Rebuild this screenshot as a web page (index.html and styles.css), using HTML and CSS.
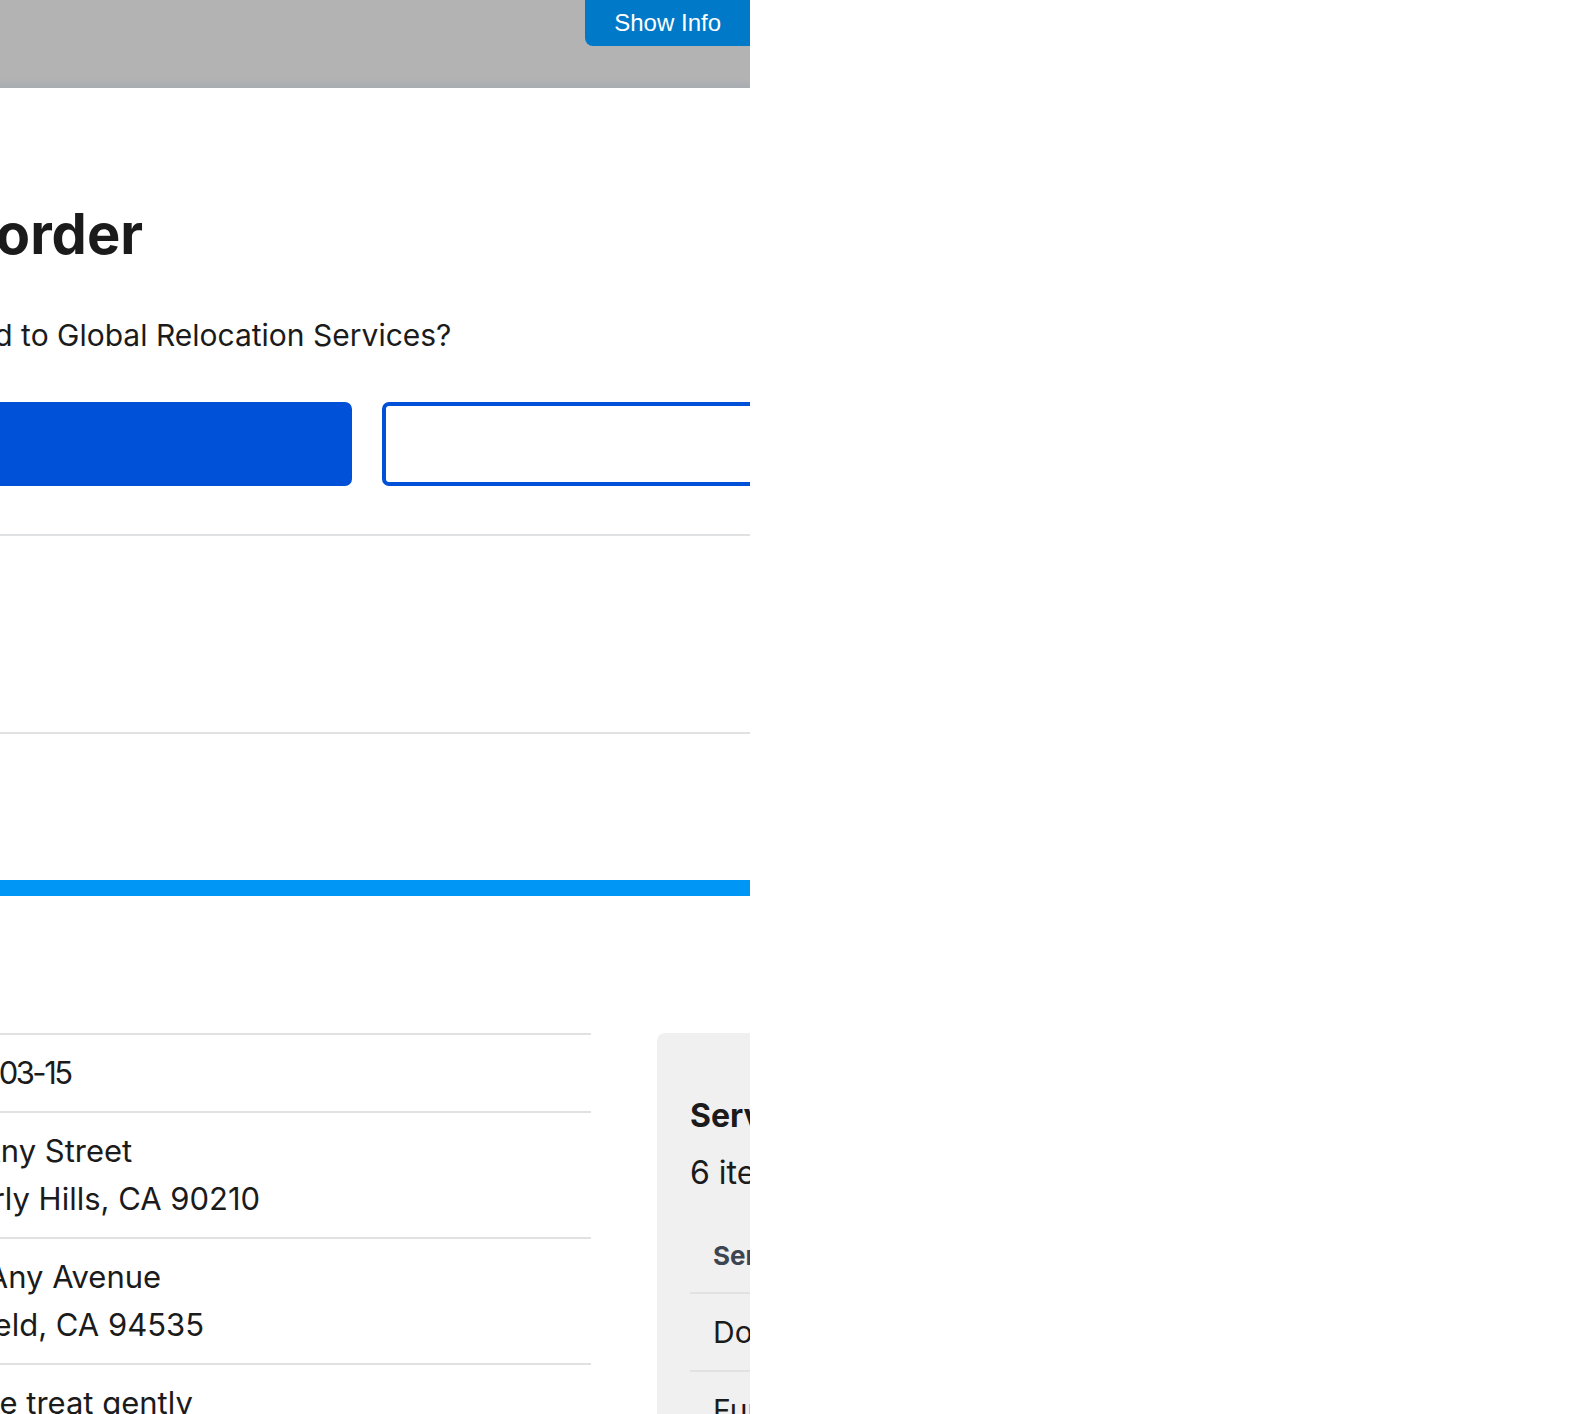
FILE: index.html
```html
<!DOCTYPE html>
<html lang="en">
<head>
<meta charset="utf-8">
<title>Transfer order</title>
<link rel="stylesheet" href="styles.css">
</head>
<body>
<div class="frame">
  <header class="topbar">
    <button class="show-info" type="button">Show Info</button>
  </header>
  <main class="page">
    <section class="confirm">
      <h1 class="confirm-title">Transfer this order</h1>
      <p class="confirm-text">Should this get transferred to Global Relocation Services?</p>
      <div class="confirm-actions">
        <button class="btn btn-primary" type="button" aria-label="Yes, transfer"></button>
        <button class="btn btn-outline" type="button" aria-label="No, go back"></button>
      </div>
    </section>
    <hr class="rule">
    <div class="blank-panel"></div>
    <hr class="rule">
    <div class="progress"></div>
    <section class="details">
      <dl class="detail-list">
        <div class="detail-row"><dt>Move date</dt><dd><time class="date" datetime="2024-03-15">2024-03-15</time></dd></div>
        <div class="detail-row"><dt>From</dt><dd>123 Any Street<br>Beverly Hills, CA 90210</dd></div>
        <div class="detail-row"><dt>To</dt><dd>456 Any Avenue<br>Fairfield, CA 94535</dd></div>
        <div class="detail-row"><dt>Notes</dt><dd>Please treat gently</dd></div>
      </dl>
      <aside class="services-card">
        <h2 class="services-title">Services</h2>
        <p class="services-count">6 items</p>
        <table class="services-table">
          <thead><tr><th>Service</th><th>Price</th></tr></thead>
          <tbody>
            <tr><td>Door-to-door move</td><td>$1,200</td></tr>
            <tr><td>Furniture assembly</td><td>$250</td></tr>
            <tr><td>Packing</td><td>$300</td></tr>
            <tr><td>Storage</td><td>$150</td></tr>
            <tr><td>Insurance</td><td>$90</td></tr>
            <tr><td>Cleaning</td><td>$120</td></tr>
          </tbody>
        </table>
      </aside>
    </section>
  </main>
</div>
</body>
</html>
```
FILE: styles.css
```css
html, body {
  margin: 0;
  padding: 0;
  background: #ffffff;
}
body {
  font-family: "Inter", "Noto Sans", sans-serif;
  color: #1b1b1b;
}
.frame {
  width: 750px;
  overflow: hidden;
}
.topbar {
  height: 88px;
  background: linear-gradient(to bottom, #b3b3b3 0, #b3b3b3 78px, #a8adb1 88px);
  display: flex;
  justify-content: flex-end;
  align-items: flex-start;
}
.show-info {
  height: 46px;
  padding: 0 29px;
  border: 0;
  border-radius: 0 0 0 8px;
  background: #0079c9;
  color: #ffffff;
  font-family: "Liberation Sans", Arial, sans-serif;
  font-size: 24px;
  line-height: 46px;
}
.page {
  width: 1500px;
  margin-left: -365px;
}
.confirm-title {
  margin: 113px 0 0;
  font-size: 56px;
  line-height: 1.2;
  font-weight: 700;
}
.confirm-text {
  margin: 45px 0 0;
  font-size: 30px;
  line-height: 45px;
}
.confirm-actions {
  margin-top: 44px;
  display: grid;
  grid-template-columns: 717px 717px;
  gap: 30px;
}
.btn {
  height: 84px;
  border-radius: 7px;
  font-family: inherit;
}
.btn-primary {
  background: #0050d8;
  border: 0;
}
.btn-outline {
  background: #ffffff;
  border: 4px solid #0050d8;
}
.rule {
  margin: 48px 0 0;
  border: 0;
  height: 2px;
  background: #dfe1e2;
}
.blank-panel {
  height: 196px;
}
.blank-panel + .rule {
  margin-top: 0;
}
.progress {
  margin-top: 146px;
  height: 16px;
  background: #0096f5;
}
.details {
  margin-top: 137px;
  display: grid;
  grid-template-columns: 956px 1fr;
  gap: 66px;
  align-items: start;
}
.detail-list {
  margin: 0;
}
.detail-row {
  display: grid;
  grid-template-columns: 250px 1fr;
  gap: 35px;
  border-top: 2px solid #dfe1e2;
  padding: 14px 0;
  font-size: 31px;
  line-height: 48px;
}
.detail-row dt {
  font-weight: 700;
}
.detail-row dd {
  margin: 0;
}
.date {
  letter-spacing: -2.5px;
}
.services-card {
  background: #f0f0f0;
  border-radius: 8px;
  padding: 62px 33px 33px;
}
.services-title {
  margin: 0;
  font-size: 32px;
  line-height: 1.3;
  font-weight: 700;
}
.services-count {
  margin: 12px 0 0;
  font-size: 32px;
  line-height: 48px;
}
.services-table {
  margin-top: 23px;
  width: 100%;
  border-collapse: collapse;
}
.services-table th {
  text-align: left;
  font-size: 26px;
  line-height: 44px;
  font-weight: 700;
  color: #3d4551;
  padding: 14px 23px;
  border-bottom: 2px solid #dfe1e2;
}
.services-table td {
  font-size: 30px;
  line-height: 48px;
  padding: 14px 23px;
  border-bottom: 2px solid #dfe1e2;
  white-space: nowrap;
}
```
